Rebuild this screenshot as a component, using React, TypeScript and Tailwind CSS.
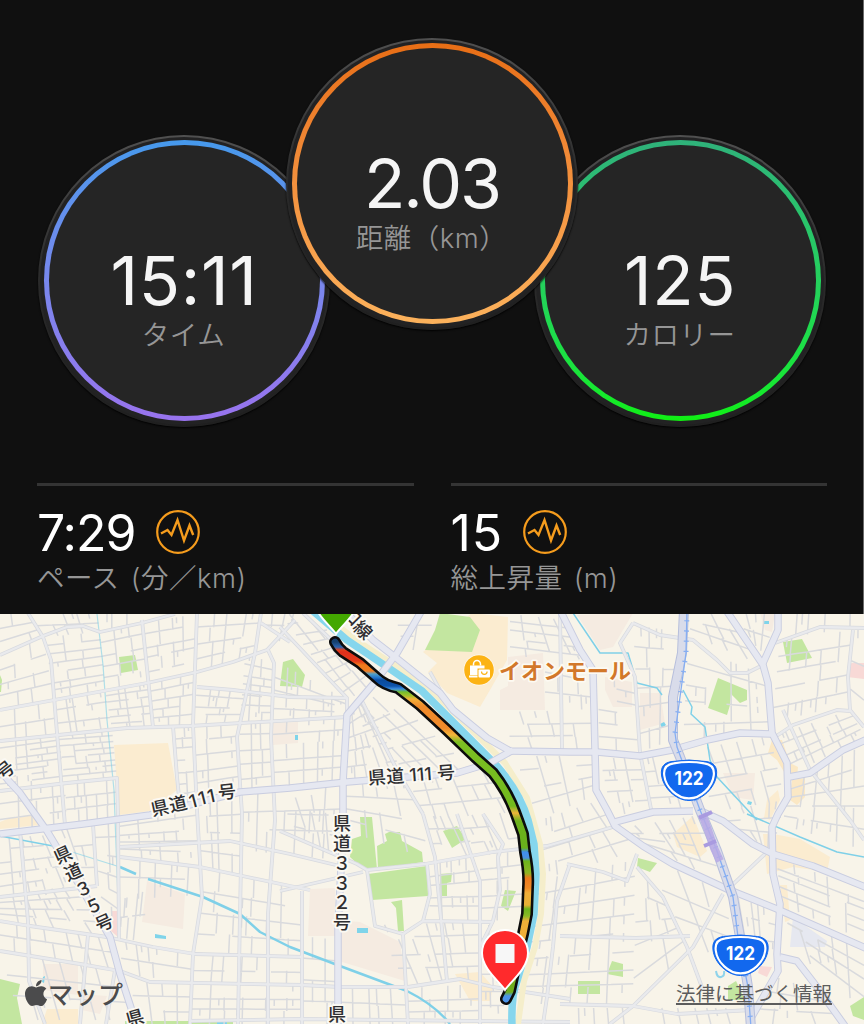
import { FaApple } from "react-icons/fa";

const LABEL = "font-['Inter','Noto_Sans_CJK_JP',sans-serif] text-[27.5px] font-[350] tracking-[0.5px] text-[#969696]";

function Ring({ value, label, tone, spacing, className = "" }: { value: string; label: string; tone: string; spacing: string; className?: string }) {
  return (
    <div className={`size-[292px] shrink-0 rounded-full bg-linear-to-b from-[#505050] via-[#2a2a2a] via-50% to-[#1f1f1f] p-[2px] shadow-[0_1px_2px_#000] ${className}`}>
      <div className="size-full rounded-full bg-[#222223] p-[3.5px]">
        <div className={`size-full rounded-full bg-linear-to-b p-[5px] ${tone}`}>
          <div className="flex size-full flex-col items-center rounded-full bg-[#252525] pt-[100px]">
            <span className={`text-[68px] leading-[70px] text-[#f5f5f5] ${spacing}`}>{value}</span>
            <span className={`mr-[1px] leading-[40px] whitespace-nowrap ${LABEL}`}>{label}</span>
          </div>
        </div>
      </div>
    </div>
  );
}

function PulseIcon() {
  return (
    <svg className="-mt-[2px] size-[44px]" viewBox="0 0 44 44" fill="none" stroke="#f59c1d">
      <circle cx="22" cy="22" r="20.8" strokeWidth="2.2" />
      <path d="M5 23.500l6.500-3.500 4 5 6-15 6.500 20.500 5.500-15 3.700 9.500" strokeWidth="2.400" />
    </svg>
  );
}

function Stat({ value, label, spacing }: { value: string; label: string; spacing: string }) {
  return (
    <div className="flex-1 border-t-3 border-[#343434] pt-[17px]">
      <div className="flex items-center gap-[20px]">
        <span className={`text-[50px] leading-[60px] text-white ${spacing}`}>{value}</span>
        <PulseIcon />
      </div>
      <div className={`-mt-[2px] leading-[34px] [word-spacing:3px] ${LABEL}`}>{label}</div>
    </div>
  );
}

const GREEN = "#c3e6a0";
const SAND = "#fbecd0";
const CLAY = "#f5ebe1";
const ROSE = "#f8d9d6";

const areas: [string, string][] = [
  [SAND, "114,745 168,743 177,790 150,811 119,815"],
  [SAND, "472,613 508,617 507,660 490,690 480,707 447,693 428,672 437,663 423,652"],
  [SAND, "0,822 10,818 32,815 40,825 0,829"],
  [SAND, "47,1009 78,1009 78,1024 42,1024"],
  [SAND, "455,974 480,972 493,987 490,1001 470,1001"],
  ["#fbe8c5", "772,740 782,740 790,763 798,767 797,777 787,777 777,760 768,753"],
  ["#fbe8c5", "792,780 805,778 805,797 797,805 790,800"],
  [SAND, "673,834 693,816 707,851 700,857 677,847"],
  [SAND, "763,834 773,834 800,839 830,857 827,872 793,867 767,874"],
  [SAND, "780,885 787,885 790,920 785,922"],
  [SAND, "767,800 778,790 780,800 770,820 764,818"],
  [CLAY, "508,657 543,653 545,710 500,710 500,690 508,686"],
  [CLAY, "272,723 298,722 298,743 273,745"],
  [CLAY, "310,889 335,888 336,920 360,922 400,942 405,981 342,962 338,936 308,936"],
  [CLAY, "43,964 78,964 78,995 43,990"],
  [CLAY, "82,994 107,996 100,1014 82,1010"],
  [CLAY, "147,881 185,894 183,929 142,922"],
  [CLAY, "577,615 633,613 613,647 600,650 587,630"],
  [CLAY, "605,677 632,682 632,707 613,707 605,690"],
  [CLAY, "640,693 660,693 665,723 640,730"],
  [CLAY, "723,773 755,773 753,800 733,797"],
  [CLAY, "760,613 775,613 772,632 765,630"],
  [ROSE, "112,911 118,911 118,937 111,931"],
  [ROSE, "848,665 852,663 864,663 864,679 847,677"],
  [ROSE, "760,966 772,967 767,977 758,973"],
  ["#e6e8f0", "793,917 827,941 825,947 790,947"],
  [GREEN, "119,657 135,655 138,670 121,673"],
  [GREEN, "283,662 293,659 305,675 302,687 280,686"],
  [GREEN, "0,675 2,680 1,692 0,692"],
  [GREEN, "440,613 470,617 480,630 472,652 425,650 435,630"],
  [GREEN, "360,817 372,817 377,869 363,869 350,857 352,839 361,836"],
  [GREEN, "377,846 387,841 385,834 389,832 400,832 402,841 422,852 423,862 378,869"],
  [GREEN, "368,874 427,866 428,896 372,900"],
  [GREEN, "391,902 402,900 404,931 398,931 396,908"],
  [GREEN, "443,831 457,826 466,839 452,848"],
  [GREEN, "440,874 452,873 451,882 447,883 447,896 441,896"],
  [GREEN, "505,890 516,891 508,911 501,906"],
  [GREEN, "0,979 20,984 17,998 22,1024 0,1024"],
  [GREEN, "125,1021 233,1021 233,1024 125,1024"],
  [GREEN, "783,642 802,639 812,658 787,663"],
  [GREEN, "718,678 747,690 747,700 740,703 731,694 730,705 727,715 708,708"],
  [GREEN, "638,858 657,863 650,872 637,867"],
  [GREEN, "612,961 623,964 623,977 607,974"],
  [GREEN, "578,981 600,981 600,994 578,994"],
  [GREEN, "728,986 736,981 745,1000 728,1000"],
  [GREEN, "850,1006 864,997 864,1020 853,1016"],
  ["#7fd4ea", "357,928 368,928 368,933 357,933"],
  ["#7fd4ea", "295,735 298,735 298,740 295,740"],
  ["#7fd4ea", "155,934 166,936 166,939 155,938"],
  ["#7fd4ea", "43,977 45,976 44,983 42,982"],
  ["#7fd4ea", "217,1020 227,1020 227,1024 217,1024"],
  ["#7fd4ea", "660,724 664,722 666,725 662,728"],
  ["#7fd4ea", "763,621 769,621 769,624 763,624"],
  ["#7fd4ea", "748,801 752,802 751,805 747,804"],
];

// street blocks: corner quad (tl, tr, br, bl), rows, columns
const blocks: [number[], number, number][] = [
  [[0, 614, 30, 614, 43, 637, 0, 655], 3, 3],
  [[30, 614, 97, 614, 100, 632, 43, 637], 2, 4],
  [[100, 614, 142, 614, 142, 623, 100, 632], 1, 3],
  [[0, 655, 43, 637, 54, 700, 0, 710], 4, 3],
  [[45, 637, 100, 632, 105, 690, 54, 700], 7, 3],
  [[100, 632, 142, 623, 149, 683, 105, 690], 5, 3],
  [[142, 623, 197, 614, 196, 672, 149, 683], 5, 4],
  [[197, 614, 261, 614, 252, 655, 196, 672], 4, 4],
  [[261, 614, 300, 614, 290, 642, 262, 640], 2, 3],
  [[0, 710, 54, 700, 58, 733, 0, 741], 2, 4],
  [[54, 700, 105, 690, 112, 729, 58, 733], 3, 5],
  [[105, 690, 149, 683, 153, 727, 112, 729], 6, 4],
  [[149, 683, 197, 672, 193, 725, 153, 727], 5, 3],
  [[197, 687, 245, 692, 238, 723, 193, 725], 4, 4],
  [[245, 655, 273, 662, 271, 722, 240, 723], 7, 3],
  [[274, 660, 347, 700, 347, 716, 271, 722], 4, 6],
  [[0, 741, 58, 733, 65, 783, 0, 791], 8, 4],
  [[58, 733, 112, 729, 117, 778, 65, 783], 8, 4],
  [[0, 791, 65, 783, 67, 825, 0, 834], 3, 4],
  [[65, 783, 117, 778, 118, 818, 67, 825], 3, 5],
  [[174, 726, 193, 725, 195, 805, 180, 807], 7, 2],
  [[194, 725, 238, 722, 241, 792, 196, 800], 5, 3],
  [[240, 722, 271, 722, 273, 788, 240, 792], 5, 3],
  [[271, 745, 345, 740, 343, 782, 273, 788], 3, 5],
  [[272, 722, 346, 717, 345, 740, 271, 745], 2, 5],
  [[0, 838, 50, 835, 75, 885, 0, 897], 5, 5],
  [[0, 897, 75, 885, 110, 937, 0, 921], 4, 6],
  [[55, 830, 93, 824, 97, 886, 82, 884], 3, 3],
  [[93, 824, 118, 820, 118, 930, 103, 914], 6, 2],
  [[118, 820, 197, 804, 202, 866, 120, 857], 5, 4],
  [[197, 800, 241, 793, 240, 875, 202, 866], 4, 4],
  [[242, 793, 343, 783, 338, 860, 241, 850], 3, 7],
  [[120, 857, 202, 867, 200, 895, 120, 900], 2, 5],
  [[202, 867, 302, 890, 302, 956, 196, 954], 4, 6],
  [[120, 900, 148, 890, 142, 942, 118, 937], 2, 6],
  [[0, 921, 110, 937, 122, 971, 0, 951], 2, 7],
  [[0, 951, 120, 971, 133, 1020, 20, 1020], 3, 6],
  [[118, 940, 195, 954, 192, 983, 124, 974], 2, 5],
  [[195, 954, 302, 957, 302, 985, 192, 984], 2, 7],
  [[130, 982, 192, 984, 190, 1024, 138, 1024], 3, 4],
  [[192, 984, 302, 985, 302, 1024, 190, 1024], 3, 6],
  [[280, 800, 343, 790, 341, 858, 300, 838], 3, 4],
  [[302, 936, 338, 940, 338, 1024, 302, 1024], 4, 3],
  [[340, 985, 405, 990, 408, 1024, 340, 1024], 2, 5],
  [[280, 614, 313, 614, 372, 682, 347, 702], 9, 3],
  [[349, 712, 385, 690, 470, 768, 410, 776], 5, 6],
  [[349, 712, 362, 697, 405, 776, 346, 780], 5, 5],
  [[346, 784, 410, 778, 430, 860, 345, 830], 4, 4],
  [[410, 778, 492, 768, 517, 812, 420, 820], 3, 6],
  [[423, 816, 457, 816, 478, 856, 436, 860], 3, 4],
  [[457, 816, 514, 812, 524, 850, 478, 856], 3, 4],
  [[428, 865, 478, 856, 480, 921, 430, 918], 5, 4],
  [[480, 856, 524, 850, 524, 920, 480, 921], 5, 3],
  [[376, 925, 478, 922, 480, 982, 406, 984], 4, 6],
  [[408, 988, 480, 984, 480, 1024, 408, 1024], 3, 4],
  [[480, 925, 500, 925, 505, 1024, 480, 1024], 6, 2],
  [[395, 614, 437, 614, 420, 650, 404, 650], 3, 2],
  [[500, 712, 592, 710, 595, 750, 515, 750], 3, 4],
  [[515, 756, 595, 756, 596, 795, 538, 820], 4, 4],
  [[510, 614, 565, 620, 592, 665, 510, 655], 5, 4],
  [[545, 655, 592, 668, 595, 710, 545, 708], 3, 3],
  [[540, 820, 600, 800, 640, 850, 540, 880], 4, 5],
  [[540, 880, 635, 860, 633, 1004, 520, 1004], 8, 5],
  [[598, 670, 634, 680, 638, 752, 599, 750], 6, 2],
  [[600, 758, 640, 758, 650, 812, 612, 815], 5, 3],
  [[642, 758, 675, 754, 693, 810, 652, 812], 4, 3],
  [[633, 625, 680, 632, 672, 740, 640, 752], 6, 3],
  [[690, 614, 728, 614, 762, 665, 690, 635], 3, 4],
  [[688, 645, 765, 675, 770, 732, 683, 742], 5, 4],
  [[735, 614, 776, 614, 765, 655, 750, 640], 2, 3],
  [[782, 614, 864, 614, 864, 627, 780, 638], 1, 6],
  [[780, 640, 852, 630, 848, 705, 772, 722], 5, 5],
  [[852, 630, 864, 630, 864, 720, 850, 706], 5, 1],
  [[776, 735, 850, 710, 864, 736, 792, 775], 4, 6],
  [[792, 780, 864, 745, 864, 850, 782, 825], 5, 6],
  [[690, 750, 770, 736, 785, 800, 715, 812], 4, 5],
  [[715, 812, 785, 800, 773, 850, 750, 838], 3, 4],
  [[620, 828, 700, 815, 722, 882, 650, 848], 4, 5],
  [[645, 855, 725, 893, 735, 960, 690, 947], 3, 3],
  [[637, 867, 664, 897, 690, 950, 633, 1004], 5, 3],
  [[560, 1008, 740, 1008, 745, 1024, 560, 1024], 1, 11],
  [[730, 895, 778, 912, 776, 955, 742, 955], 3, 5],
  [[776, 858, 864, 890, 864, 940, 782, 905], 5, 5],
  [[783, 912, 864, 950, 864, 1010, 800, 955], 4, 5],
  [[770, 975, 815, 990, 840, 1024, 756, 1024], 3, 4],
];

const noise = (n: number) => {
  const v = Math.sin(n * 127.1 + 11.7) * 43758.5453;
  return v - Math.floor(v);
};

function streets() {
  let d = "";
  blocks.forEach(([q, rows, cols], b) => {
    const at = (u: number, v: number) => {
      const x = (1 - v) * ((1 - u) * q[0] + u * q[2]) + v * ((1 - u) * q[6] + u * q[4]);
      const y = (1 - v) * ((1 - u) * q[1] + u * q[3]) + v * ((1 - u) * q[7] + u * q[5]);
      return `${x.toFixed(1)} ${y.toFixed(1)}`;
    };
    for (let r = 0; r < rows; r++) {
      for (let c = 0; c < cols; c++) {
        const n = b * 97 + r * 13 + c;
        const bend = (noise(b * 31 + r) - 0.5) * 0.3;
        const v = (r + (r ? bend : 0)) / rows;
        if (r > 0 && noise(n) > 0.18) d += `M${at(c / cols, v)}L${at((c + 1) / cols, v)}`;
        const u = (c + (noise(b * 17 + c + (noise(n) > 0.7 ? r : 0)) - 0.5) * 0.5) / cols;
        if (c > 0 && noise(n + 500) > 0.22) d += `M${at(u, r / rows)}L${at(u, (r + 1) / rows)}`;
        if (noise(n + 900) > 0.88) d += `M${at((c + 0.5) / cols, v)}L${at((c + 0.5) / cols, v + 0.5 / rows)}`;
      }
    }
  });
  return d;
}

const lanes = [
  "M0 655L43 636 67 627 83 626 100 632 142 623 175 614",
  "M28 613L43 637 51 660 57 733 65 825",
  "M0 710L147 683 197 672 233 662 267 650 295 620",
  "M0 741L127 728 190 726 347 717",
  "M142 620L153 727",
  "M197 613L193 725 197 810 202 897 193 954 190 1024",
  "M261 613L255 653 245 700 237 737 242 814 240 914 238 1024",
  "M268 650L274 663 271 737 275 820 268 914 268 1024",
  "M0 791L67 783 117 778 118 817 119 940",
  "M197 687L233 690 290 697 347 698",
  "M261 623L290 642",
  "M173 726L177 777 180 807",
  "M0 921L30 926 107 937 153 947 195 954 302 957",
  "M0 951L80 964 120 971 150 982 302 985 340 987 408 987",
  "M120 847L230 841 290 854 340 866",
  "M120 857L200 867 290 886 310 890",
  "M20 831L28 921 29 981 45 1024",
  "M0 897L97 886",
  "M88 935L80 1024M115 970L106 1024M93 824L97 886",
  "M190 1021L300 1019 570 1022",
  "M280 627L347 698 347 715",
  "M303 613L363 670M360 697L397 770 423 814",
  "M280 831L357 864 367 870 425 864 493 852 547 846 613 827",
  "M367 870L375 926 403 934 408 1024",
  "M403 934L423 921 493 922M423 921L430 894 427 864",
  "M423 814L435 857 447 981",
  "M457 814L480 881 480 1024",
  "M408 987L460 979 493 987 570 999",
  "M483 814L503 844 498 857 500 890 493 921 480 947",
  "M280 891L363 872M302 891L302 1024",
  "M570 864L557 901 553 947 547 997 543 1024",
  "M633 623L660 635 693 640 717 660 730 673 747 673 763 665",
  "M633 623L620 643 635 677 640 753 652 814",
  "M775 643L820 627 864 628",
  "M853 630L848 677 850 710 864 727",
  "M775 737L793 725 837 710 850 711M783 710L810 770 850 820 864 840",
  "M637 867L663 897 687 947 703 990",
  "M723 894L693 947 633 1006 610 1024M727 890L765 854",
  "M560 1004L633 1006 677 1014 751 1010",
  "M567 864L603 872 627 881 637 854",
  "M560 936L636 938 690 936",
  "M430 672L440 690",
  "M560 614L562 751",
];

const roads = [
  "M0 834L83 824 150 815 240 792 290 788 347 782 457 773 490 763 513 750",
  "M0 770L8 780 20 793 47 831 77 881 110 937 120 974 133 1014 138 1030",
  "M340 606L373 640 395 657 440 693 453 710 487 738 510 751 570 752 597 752 640 756 672 750 707 740 740 733 772 734",
  "M422 610L397 653 375 682 347 715 343 782 343 830 338 927 338 1030",
  "M560 610L580 650 593 670 596 790 607 810 615 826 643 846 673 864 727 889 777 909 870 950",
  "M726 610L763 665 768 683 772 733 787 763 788 797 778 814 772 827 773 874 780 904 777 954 778 971 750 1020",
  "M778 610L778 630 763 663",
  "M789 777L810 773 843 750 870 738",
  "M615 822L653 812 693 811",
  "M703 812L723 821 753 844 773 854 813 866 870 889",
  "M780 957L797 961 817 987 845 1026",
];

const ROUTE = "M335 642Q338 648 343 652L360 663 377 678Q384 685 398 688L420 705 447 730 475 757 493 773Q509 793 518 820L523 834 525 852Q529 872 528 887L527 914 523 934 518 954 510 991 506 999";
const ROUTE_122 = "M684 610L682 653 673 697 673 740 680 757 700 810 717 851 733 897 740 937 748 987 751 1028";
const RAIL = "M687 610L686 653 680 697 675 733 677 747 700 810 717 851 733 897 738 937 748 987 751 1028";

const pace: [number, string][] = [
  [642, "#16406e"], [647, "#2b63ad"], [650, "#e0401c"], [652, "#e02f1c"], [661, "#e33a1a"], [665, "#f07a1c"],
  [671, "#ef7d22"], [674, "#4fa0c8"], [678, "#1f6fc9"], [680, "#0b4b9c"], [686, "#0d54ac"], [689, "#3c8ee0"],
  [692, "#74bd2a"], [696, "#a9bf2c"], [699, "#f3b13a"], [706, "#f08a2a"], [728, "#f08a2a"], [735, "#f3b63c"],
  [742, "#7cbf22"], [806, "#72b81e"], [813, "#f0b43a"], [821, "#6cb11c"], [848, "#69b01c"], [852, "#3f8df0"],
  [858, "#4a90e0"], [861, "#6cb41c"], [873, "#8fb424"], [878, "#ee7a1e"], [888, "#f08a26"], [893, "#f0ae38"],
  [905, "#e6b036"], [909, "#6cb41c"], [916, "#8ab826"], [921, "#f0b038"], [940, "#f0b038"], [985, "#6fae1c"],
  [992, "#6fae1c"], [996, "#4b93e8"], [1000, "#4b93e8"],
];

function Glyph({ x, y, r = 0, size = 18, width, children }: { x: number; y: number; r?: number; size?: number; width?: number; children: string }) {
  return (
    <text
      x={x}
      y={y + size * 0.36}
      fontSize={size}
      textLength={width}
      transform={`rotate(${r} ${x} ${y})`}
      textAnchor="middle"
      fill="#2f2f31"
      stroke="#fbf9f3"
      strokeWidth="4"
      strokeLinejoin="round"
      paintOrder="stroke"
      className="font-medium"
    >
      {children}
    </text>
  );
}

function Shield({ x, y }: { x: number; y: number }) {
  const d = "M-17 -18.500Q0 -21.500 17 -18.500C25 -17.500 28.500 -13 27.500 -5C26 8 13 20.500 0 20.500S-26 8 -27.500 -5C-28.500 -13 -25 -17.500 -17 -18.500Z";
  return (
    <g transform={`translate(${x} ${y})`}>
      <path d={d} fill="#1268ee" stroke="#1268ee" />
      <path d={d} fill="#1268ee" stroke="#fff" strokeWidth="2.400" transform="scale(.9)" />
      <text y="4.500" textAnchor="middle" fontSize="18.500" textLength="29" lengthAdjust="spacingAndGlyphs" fill="#fff" className="font-bold">122</text>
    </g>
  );
}

function Pin({ x, y, color, stop }: { x: number; y: number; color: string; stop?: boolean }) {
  return (
    <g transform={`translate(${x} ${y})`}>
      <path d="M0 0C-5 -8 -23 -21 -23 -37A23 23 0 0 1 23 -37C23 -21 5 -8 0 0Z" fill={color} stroke="#fff" strokeWidth="2" />
      {stop && <rect x="-9.500" y="-46" width="19" height="19" fill="#f7f7f7" />}
    </g>
  );
}

function RunMap() {
  return (
    <svg className="block h-[410px] w-[864px] font-['Inter','Noto_Sans_CJK_JP',sans-serif]" viewBox="0 614 864 410" fill="none">
      <defs>
        <linearGradient id="pace" gradientUnits="userSpaceOnUse" x1="0" y1="642" x2="0" y2="1000">
          {pace.map(([y, c]) => (
            <stop key={y} offset={(y - 642) / 358} stopColor={c} />
          ))}
        </linearGradient>
      </defs>
      <rect y="614" width="864" height="410" fill="#f8f4e9" />
      {areas.map(([fill, points]) => (
        <polygon key={points} points={points} fill={fill} />
      ))}
      <path d={streets()} stroke="#d9dadd" strokeWidth="1.5" />

      <g stroke="#7fd0e8" strokeLinejoin="round">
        <path d="M0 836L53 846" strokeWidth="1.5" />
        <path d="M53 846L120 867" strokeWidth="1.2" opacity=".6" />
        <path d="M120 867L136 874M148 879L203 897 240 914 260 932 290 947 340 966 407 991Q435 1005 450 1024" strokeWidth="2.500" />
        <path d="M97 614L103 665 107 720 114 790 118 900" strokeWidth="1.2" opacity=".6" />
        <path d="M573 613L600 653 628 653 637 683 657 688 662 695" strokeWidth="1.500" />
        <path d="M683 690L692 707 691 714 705 727 710 760 717 777 757 820M747 814L800 837 837 852 864 857" strokeWidth="1.500" />
      </g>

      <g strokeLinejoin="round">
        {lanes.map((d) => <path key={d} d={d} stroke="#d8dadf" strokeWidth="3.800" />)}
        {lanes.map((d) => <path key={d} d={d} stroke="#e9eaed" strokeWidth="2.300" />)}
      </g>

      <path d="M322 613L356 640 402 670 431 690 477 735 505 763 527 798 540 844 543 874 541 914 535 947 524 981 518 1024" stroke="#f5eecb" strokeWidth="6" />
      <path d="M313 611L347 640 393 671 422 691 468 737 496 765Q520 792 528 820L534 844 536 874 534 914 527 947 517 981Q511 995 512 1026" stroke="#86d6ed" strokeWidth="7.500" />

      <g strokeLinejoin="round">
        {roads.map((d) => <path key={d} d={d} stroke="#c9cde0" strokeWidth="7.500" />)}
        {roads.map((d) => <path key={d} d={d} stroke="#e6e8f1" strokeWidth="5.600" />)}
        <path d={ROUTE_122} stroke="#b7bfdc" strokeWidth="10" />
        <path d={ROUTE_122} stroke="#d9dcea" strokeWidth="8" />
        <path d={RAIL} stroke="#86aef2" strokeWidth="1.300" />
        <path d={RAIL} stroke="#86aef2" strokeWidth="5" strokeDasharray="1.200 9" />
        <path d="M702 814L708 830 714 848 720 861" stroke="#b7a9e4" strokeWidth="8" opacity=".85" />
        <path d="M699 818L712 812M704 846L716 841" stroke="#a99be0" strokeWidth="4" />
      </g>

      <path d={ROUTE} stroke="#0c0c0c" strokeWidth="12" strokeLinecap="round" strokeLinejoin="round" />
      <path d={ROUTE} stroke="url(#pace)" strokeWidth="6.800" strokeLinecap="round" strokeLinejoin="round" />

      <Glyph x={352} y={616} r={45}>口</Glyph>
      <Glyph x={363} y={630} r={45}>線</Glyph>
      <Pin x={336} y={634} color="#43a800" />
      <Pin x={505} y={990} color="#ff2a2c" stop />

      <Glyph x={5} y={770} r={-38}>号</Glyph>
      <Glyph x={160} y={808} r={-12}>県</Glyph>
      <Glyph x={178} y={804} r={-13}>道</Glyph>
      <Glyph x={193} y={801} r={-15}>1</Glyph>
      <Glyph x={202} y={798} r={-14}>1</Glyph>
      <Glyph x={211} y={796} r={-12}>1</Glyph>
      <Glyph x={227} y={792} r={-6}>号</Glyph>
      <Glyph x={411.5} y={775} r={-4} width={87}>県道 111 号</Glyph>
      {["県", "道", "３", "３", "２", "号"].map((c, i) => (
        <Glyph key={i} x={342} y={824 + i * 19.7}>{c}</Glyph>
      ))}
      <Glyph x={337} y={1015}>県</Glyph>
      {["県", "道", "３", "５", "号"].map((c, i) => (
        <Glyph key={i} x={63 + i * 10.3} y={855 + i * 16.9} r={-24}>{c}</Glyph>
      ))}
      <Glyph x={135} y={1018} r={-15}>県</Glyph>

      <circle cx="479" cy="670" r="15.500" fill="#fff" opacity=".7" />
      <circle cx="479" cy="670" r="14.800" fill="#fcb314" />
      <path d="M473.500 665.500v-1.500a3.500 3.500 0 0 1 7 0v1.500" stroke="#fff" strokeWidth="1.500" />
      <path d="M470 665.500h14.500v3h-7v6.500h-7.500z" fill="#fff" />
      <rect x="478.500" y="669.500" width="11.500" height="8" rx="1" fill="#fff" />
      <path d="M481.500 671.500a2.800 2.800 0 0 0 5.600 0" stroke="#fcb314" strokeWidth="1.200" />
      <path d="M469 676.500h8.500" stroke="#fff" strokeWidth="2" />
      <text x="499" y="678.500" fontSize="22" textLength="132" fill="#d2782a" stroke="#fdfaf2" strokeWidth="3.500" strokeLinejoin="round" paintOrder="stroke" className="font-bold">イオンモール</text>

      <Shield x={689} y={780} />
      <path d="M716 971q1 7 5 6t3-6" stroke="#8fd3ea" strokeWidth="2" />
      <Shield x={740.5} y={955} />
    </svg>
  );
}

export default function App() {
  return (
    <div className="relative h-[1024px] w-[864px] overflow-hidden bg-[#101010] font-['Inter','Noto_Sans_CJK_JP',sans-serif]">
      <section className="flex h-[614px] flex-col shadow-[inset_-1px_0_#6b6b6b]">
        <div className="flex justify-center pt-[37.5px]">
          <Ring value="15:11" label="タイム" spacing="tracking-[0.6px]" tone="from-[#4599ec] to-[#9873ee]" className="mt-[97px]" />
          <Ring value="2.03" label="距離（km）" spacing="tracking-[-2px]" tone="from-[#e86e15] to-[#fcb25c]" className="z-10 -mx-[44px]" />
          <Ring value="125" label="カロリー" spacing="tracking-[0.5px]" tone="from-[#2fb27a] to-[#10ef10]" className="mt-[97px]" />
        </div>
        <div className="mt-[56.5px] flex gap-[37px] px-[37px]">
          <Stat value="7:29" label="ペース (分／km)" spacing="tracking-[-1px]" />
          <Stat value="15" label="総上昇量 (m)" spacing="tracking-[0.8px]" />
        </div>
      </section>
      <section className="relative">
        <RunMap />
        <div className="absolute inset-x-0 bottom-0 flex items-center justify-between pr-[32px] pb-[13px] pl-[21px] font-['Noto_Sans_CJK_JP',sans-serif]">
          <div className="flex items-center text-[#4b4b4c]">
            <FaApple className="size-[30px]" />
            <span className="-ml-[3px] text-[25px] leading-[36px] font-medium">マップ</span>
          </div>
          <span className="text-[19.5px] leading-[36px] text-[#5c5c5c] underline decoration-2 underline-offset-2">法律に基づく情報</span>
        </div>
      </section>
    </div>
  );
}
